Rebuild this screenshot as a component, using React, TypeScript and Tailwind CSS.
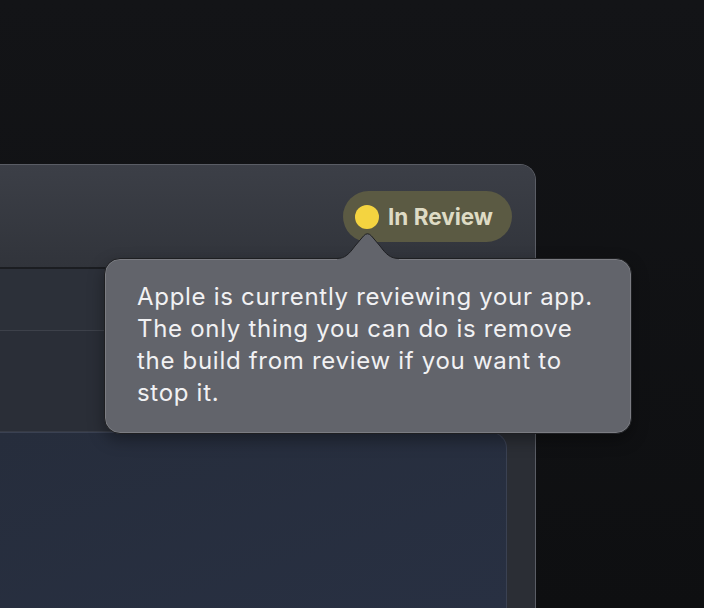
import React from "react";

export default function App() {
  return (
    <div
      className="relative w-[704px] h-[608px] overflow-hidden bg-gradient-to-b from-[#131417] to-[#0e0f11]"
      style={{ fontFamily: "Inter, 'Noto Sans', sans-serif" }}
    >
      <div className="pt-[164px]">
        {/* window */}
        <div className="w-[536px] h-[444px] border-t border-r border-[#5a5d65] rounded-tr-[16px] bg-[#2b2e35] flex flex-col overflow-hidden">
          <div className="h-[102px] shrink-0 bg-gradient-to-b from-[#3c3f47] to-[#31343b] flex justify-end items-start pt-[26px] pr-[23px]">
            <div className="h-[51px] rounded-full bg-[#5b5a43] flex items-center pl-[12px] pr-[19px] gap-[9px]">
              <div className="w-[24px] h-[24px] rounded-full bg-[#f4d440]" />
              <span className="text-[22.5px] font-bold text-[#dedbc4] tracking-[0px]">In Review</span>
            </div>
          </div>
          <div className="h-[2px] shrink-0 bg-[#1b1d21]" />
          <div className="h-[61px] shrink-0 bg-[#2c3039]" />
          <div className="h-[1px] shrink-0 bg-[#3d414a]" />
          <div className="h-[100px] shrink-0 bg-[#2a2e37]" />
          <div className="h-[1px] shrink-0 bg-[#373b45]" />
          <div className="flex-1 mr-[28px] rounded-tr-[16px] border-t border-r border-[#3a4152] bg-gradient-to-br from-[#262d3c] to-[#283042]" />
        </div>
      </div>

      {/* tooltip */}
      <div className="absolute left-[104px] top-[258px] w-[528px] h-[176px] rounded-[16px] bg-[#62646b] border border-[#1e1f22] shadow-[inset_0_0_0_1px_rgba(255,255,255,0.16),0_6px_16px_rgba(0,0,0,0.35)] pl-[32px] pt-[22px]">
        <p className="text-[24px] leading-[32px] tracking-[0.7px] text-[#f1f1f3] whitespace-nowrap">
          Apple is currently reviewing your app.
          <br />
          The only thing you can do is remove
          <br />
          the build from review if you want to
          <br />
          stop it.
        </p>
      </div>
      {/* tail */}
      <svg
        className="absolute left-[337px] top-[232px]"
        width="62"
        height="28"
        viewBox="0 0 62 28"
      >
        <path
          d="M0 26.5 C 8 26.5, 12 22, 18 14 L 26.5 4 Q 30.5 -0.5 34.5 4 L 43 14 C 49 22, 53 26.5, 62 26.5 L 62 28 L 0 28 Z"
          fill="#62646b"
        />
        <path
          d="M0 26.5 C 8 26.5, 12 22, 18 14 L 26.5 4 Q 30.5 -0.5 34.5 4 L 43 14 C 49 22, 53 26.5, 62 26.5"
          fill="none"
          stroke="#1e1f22"
          strokeWidth="1"
        />
      </svg>
    </div>
  );
}
